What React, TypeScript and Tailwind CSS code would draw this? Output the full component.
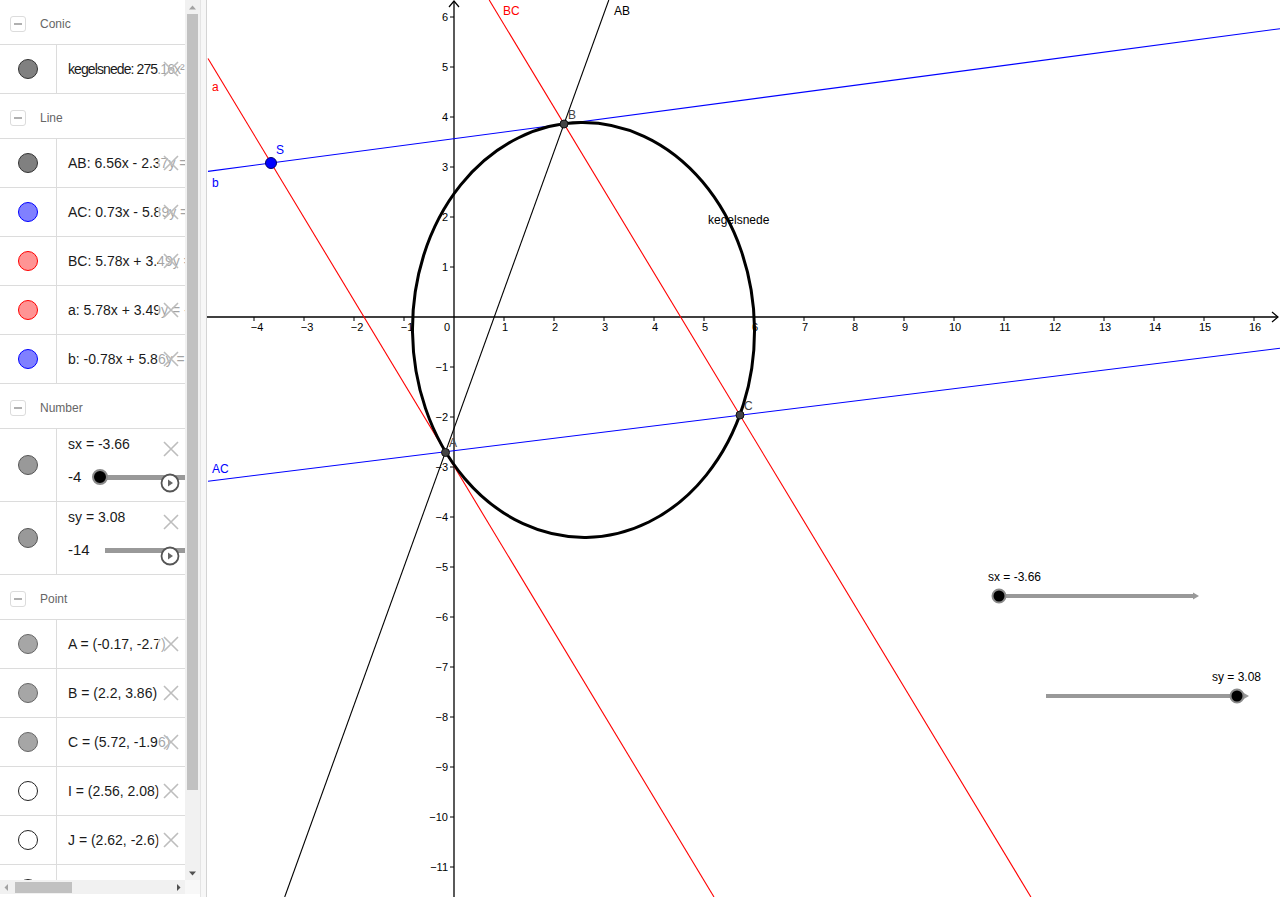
import React from "react";

interface Item {
  text: string;
  marble: string;
  textClass?: string;
}

const lineItems: Item[] = [
  { text: "AB: 6.56x - 2.37y = 5.28", marble: "bg-[#808080] border-[#333]" },
  { text: "AC: 0.73x - 5.89y = 15.78", marble: "bg-[#8080ff] border-[#0000ff]" },
  { text: "BC: 5.78x + 3.49y = 26.2", marble: "bg-[#ff9494] border-[#ff0000]" },
  { text: "a: 5.78x + 3.49y = -10.4", marble: "bg-[#ff9494] border-[#ff0000]" },
  { text: "b: -0.78x + 5.86y = 20.9", marble: "bg-[#8080ff] border-[#0000ff]" },
];

const pointItems: Item[] = [
  { text: "A = (-0.17, -2.7)", marble: "bg-[#a6a6a6] border-[#666]" },
  { text: "B = (2.2, 3.86)", marble: "bg-[#a6a6a6] border-[#666]" },
  { text: "C = (5.72, -1.96)", marble: "bg-[#a6a6a6] border-[#666]" },
  { text: "I = (2.56, 2.08)", marble: "bg-white border-[#222]" },
  { text: "J = (2.62, -2.6)", marble: "bg-white border-[#222]" },
  { text: "K = (2.59, -0.26)", marble: "bg-white border-[#222]" },
];

const XIcon = () => (
  <svg width="16" height="16" viewBox="0 0 16 16">
    <path d="M1 1L15 15M15 1L1 15" stroke="#bdbdbd" strokeWidth="1.6" />
  </svg>
);

const PlayIcon = () => (
  <svg width="20" height="20" viewBox="0 0 20 20">
    <circle cx="10" cy="10" r="8.5" fill="white" stroke="#555" strokeWidth="1.8" />
    <path d="M8 6.5L13 10L8 13.5Z" fill="#666" />
  </svg>
);

const Header = ({ title }: { title: string }) => (
  <div className="h-[45px] shrink-0 flex items-center pt-[4px] border-b border-[#dcdcdc]">
    <div className="ml-[10px] w-[16px] h-[16px] rounded-[3px] border border-[#dcdcdc] flex items-center justify-center">
      <div className="w-[8px] h-[2px] bg-[#b0b0b0]" />
    </div>
    <span className="ml-[14px] text-[12px] text-[#666]">{title}</span>
  </div>
);

const Row = ({ text, marble, textClass = "" }: Item) => (
  <div className="h-[49px] shrink-0 flex border-b border-[#dcdcdc] relative">
    <div className="w-[57px] shrink-0 border-r border-[#dcdcdc] flex items-center justify-center">
      <div className={`w-[20px] h-[20px] rounded-full border ${marble}`} />
    </div>
    <div className={`flex-1 min-w-0 pl-[11px] flex items-center overflow-hidden whitespace-nowrap text-[14px] text-[#1a1a1a] ${textClass}`}>
      {text}
    </div>
    <div className="absolute right-0 top-0 bottom-0 w-[27px] bg-white/60 flex items-center justify-center pr-[2px]">
      <XIcon />
    </div>
  </div>
);

const SliderRow = ({ label, min, minWidth, knob }: { label: string; min: string; minWidth: string; knob: boolean }) => (
  <div className="h-[73px] shrink-0 flex border-b border-[#dcdcdc] relative">
    <div className="w-[57px] shrink-0 border-r border-[#dcdcdc] flex items-center justify-center">
      <div className="w-[20px] h-[20px] rounded-full border bg-[#999] border-[#555]" />
    </div>
    <div className="flex-1 min-w-0 pl-[11px] pt-[6px] flex flex-col overflow-hidden text-[#1a1a1a]">
      <div className="h-[18px] text-[14px] leading-[18px] whitespace-nowrap">{label}</div>
      <div className="mt-[15px] h-[18px] flex items-center">
        <span className={`${minWidth} shrink-0 text-[15px] leading-[18px]`}>{min}</span>
        <div className="relative flex-1 h-[16px]">
          <div className={`absolute ${knob ? "left-[8px]" : "left-0"} right-0 top-[6px] h-[5px] bg-[#999]`} />
          {knob && <div className="absolute left-0 top-0 w-[16px] h-[16px] rounded-full bg-black border-2 border-[#8a8a8a]" />}
        </div>
      </div>
    </div>
    <div className="absolute right-[6px] top-[12px]">
      <XIcon />
    </div>
    <div className="absolute right-[5px] top-[44px]">
      <PlayIcon />
    </div>
  </div>
);

const Tri = ({ d, fill }: { d: string; fill: string }) => (
  <svg width="9" height="9" viewBox="0 0 9 9">
    <path d={d} fill={fill} />
  </svg>
);

const px = (x: number) => 454 + 50 * x;
const py = (y: number) => 317 - 50 * y;

const xs = Array.from({ length: 21 }, (_, i) => i - 4).filter((v) => v !== 0);
const ys = Array.from({ length: 18 }, (_, i) => i - 11).filter((v) => v !== 0);

const Graphics = () => (
  <svg className="block w-full h-full" viewBox="207 0 1073 897" fontFamily="'Liberation Sans', Arial, sans-serif">
    {/* axes */}
    <line x1="207" y1="317" x2="1278" y2="317" stroke="#000" strokeWidth="1.3" />
    <path d="M1272 312L1278 317L1272 322" fill="none" stroke="#000" strokeWidth="1.2" />
    <line x1="454" y1="1" x2="454" y2="897" stroke="#000" strokeWidth="1.3" />
    <path d="M449 7L454 1L459 7" fill="none" stroke="#000" strokeWidth="1.2" />
    {xs.map((v) => (
      <g key={`x${v}`}>
        <line x1={px(v)} y1="317" x2={px(v)} y2="321" stroke="#000" strokeWidth="1" />
        <text x={px(v) + (v < 0 ? 3 : 1)} y="331" fontSize="11" textAnchor="middle" fill="#000">
          {v < 0 ? `\u2212${-v}` : v}
        </text>
      </g>
    ))}
    <text x="450" y="331" fontSize="11" textAnchor="end" fill="#000">0</text>
    {ys.map((v) => (
      <g key={`y${v}`}>
        <line x1="450" y1={py(v)} x2="454" y2={py(v)} stroke="#000" strokeWidth="1" />
        <text x="448" y={py(v) + 4} fontSize="11" textAnchor="end" fill="#000">
          {v < 0 ? `\u2212${-v}` : v}
        </text>
      </g>
    ))}

    {/* lines */}
    <line x1="608.8" y1="0" x2="284.7" y2="897" stroke="#000" strokeWidth="1.1" />
    <line x1="489.2" y1="0" x2="1030.9" y2="897" stroke="#ff0000" strokeWidth="1.1" />
    <line x1="208" y1="58.5" x2="714" y2="897" stroke="#ff0000" strokeWidth="1.1" />
    <line x1="208" y1="171.4" x2="1280" y2="28.7" stroke="#0000ff" strokeWidth="1.1" />
    <line x1="208" y1="481.2" x2="1280" y2="348.3" stroke="#0000ff" strokeWidth="1.1" />

    {/* conic */}
    <ellipse cx="583.5" cy="330" rx="171" ry="207.4" transform="rotate(-0.73 583.5 330)" fill="none" stroke="#000" strokeWidth="3" />

    {/* points */}
    <circle cx="445.5" cy="452.5" r="4" fill="#444" stroke="#111" strokeWidth="1" />
    <circle cx="564" cy="124" r="4" fill="#444" stroke="#111" strokeWidth="1" />
    <circle cx="740" cy="415" r="4" fill="#444" stroke="#111" strokeWidth="1" />
    <circle cx="271" cy="163" r="5.5" fill="#0000ff" stroke="#000066" strokeWidth="1" />

    {/* labels */}
    <text x="614" y="15" fontSize="12" fill="#000">AB</text>
    <text x="503" y="15" fontSize="12" fill="#ff0000">BC</text>
    <text x="212" y="91" fontSize="12" fill="#ff0000">a</text>
    <text x="212" y="187" fontSize="12" fill="#0000ff">b</text>
    <text x="212" y="473" fontSize="12" fill="#0000ff">AC</text>
    <text x="276" y="154" fontSize="12" fill="#0000ff">S</text>
    <text x="568" y="119" fontSize="12" fill="#444">B</text>
    <text x="744" y="410" fontSize="12" fill="#444">C</text>
    <text x="449" y="447" fontSize="12" fill="#444">A</text>
    <text x="708" y="224" fontSize="12" fill="#000">kegelsnede</text>

    {/* sliders */}
    <text x="988" y="581" fontSize="12" fill="#000">sx = -3.66</text>
    <line x1="999" y1="596" x2="1194" y2="596" stroke="#999" strokeWidth="4" />
    <path d="M1193 592.5L1199 596L1193 599.5Z" fill="#999" />
    <circle cx="999" cy="596" r="6.5" fill="#000" stroke="#8a8a8a" strokeWidth="2" />

    <text x="1212" y="681" fontSize="12" fill="#000">sy = 3.08</text>
    <line x1="1046" y1="696" x2="1244" y2="696" stroke="#999" strokeWidth="4" />
    <path d="M1243 692.5L1249 696L1243 699.5Z" fill="#999" />
    <circle cx="1237" cy="696" r="6.5" fill="#000" stroke="#8a8a8a" strokeWidth="2" />
  </svg>
);

export default function App() {
  return (
    <div className="flex w-[1280px] h-[897px] overflow-hidden bg-white font-['Liberation_Sans',Arial,sans-serif]">
      <div className="w-[200px] shrink-0 flex flex-col">
        <div className="h-[880px] shrink-0 flex">
          <div className="w-[185px] shrink-0 flex flex-col overflow-hidden">
            <Header title="Conic" />
            <Row
              text="kegelsnede: 275.16x² + 1.36xy + 184.01y² - 1425.86x + 95.77y = 1366.16"
              marble="bg-[#808080] border-[#333]"
              textClass="tracking-[-0.9px]"
            />
            <Header title="Line" />
            {lineItems.map((it) => (
              <Row key={it.text} {...it} />
            ))}
            <Header title="Number" />
            <SliderRow label="sx = -3.66" min="-4" minWidth="w-[24px]" knob />
            <SliderRow label="sy = 3.08" min="-14" minWidth="w-[37px]" knob={false} />
            <Header title="Point" />
            {pointItems.map((it) => (
              <Row key={it.text} {...it} />
            ))}
          </div>
          <div className="w-[15px] shrink-0 bg-[#f1f1f1] flex flex-col">
            <div className="h-[14px] flex items-center justify-center">
              <Tri d="M1 6.5L4.5 2.5L8 6.5Z" fill="#a3a3a3" />
            </div>
            <div className="ml-[2px] w-[11px] h-[776px] bg-[#c1c1c1]" />
            <div className="flex-1" />
            <div className="h-[14px] flex items-center justify-center">
              <Tri d="M1 2.5L4.5 6.5L8 2.5Z" fill="#505050" />
            </div>
          </div>
        </div>
        <div className="h-[14px] shrink-0 flex">
          <div className="w-[185px] bg-[#f1f1f1] flex items-center">
            <div className="w-[13px] flex justify-center">
              <Tri d="M6 1L2.5 4.5L6 8Z" fill="#a3a3a3" />
            </div>
            <div className="ml-[2px] w-[57px] h-[11px] bg-[#c1c1c1]" />
            <div className="flex-1" />
            <div className="w-[13px] flex justify-center">
              <Tri d="M3 1L6.5 4.5L3 8Z" fill="#505050" />
            </div>
          </div>
          <div className="w-[15px] bg-[#f8f8f8]" />
        </div>
      </div>
      <div className="w-[7px] shrink-0 bg-[#f7f7f7] border-l border-l-[#e4e4e4] border-r border-r-[#d4d4d4]" />
      <div className="flex-1 min-w-0 h-full">
        <Graphics />
      </div>
    </div>
  );
}
